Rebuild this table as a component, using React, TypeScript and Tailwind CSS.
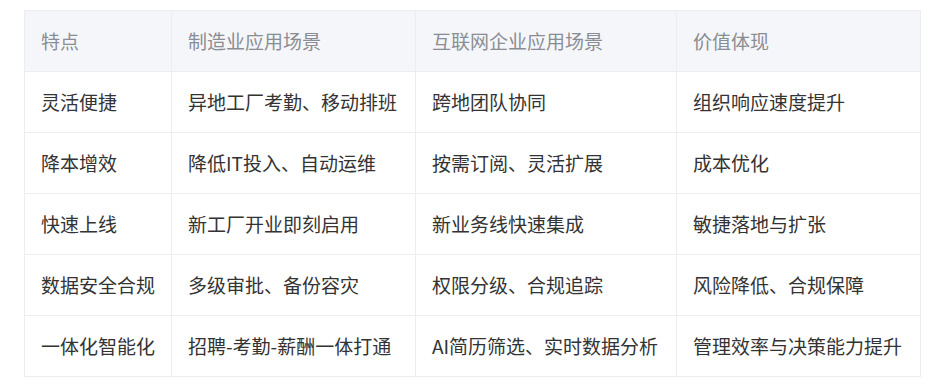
import React from "react";

const header = ["特点", "制造业应用场景", "互联网企业应用场景", "价值体现"];
const rows = [
  ["灵活便捷", "异地工厂考勤、移动排班", "跨地团队协同", "组织响应速度提升"],
  ["降本增效", "降低IT投入、自动运维", "按需订阅、灵活扩展", "成本优化"],
  ["快速上线", "新工厂开业即刻启用", "新业务线快速集成", "敏捷落地与扩张"],
  ["数据安全合规", "多级审批、备份容灾", "权限分级、合规追踪", "风险降低、合规保障"],
  ["一体化智能化", "招聘-考勤-薪酬一体打通", "AI简历筛选、实时数据分析", "管理效率与决策能力提升"],
];

export default function App() {
  return (
    <div className="min-h-[390px] w-[951px] bg-white pl-[24px] pt-[10px]" style={{ fontFamily: '"Noto Sans CJK SC", "Noto Sans", sans-serif' }}>
      <table className="table-fixed border-collapse text-[19px] leading-[26px] w-[896px]">
        <colgroup>
          <col className="w-[147px]" />
          <col className="w-[244px]" />
          <col className="w-[261px]" />
          <col className="w-[244px]" />
        </colgroup>
        <thead>
          <tr className="bg-[#f5f6fa]">
            {header.map((h) => (
              <th key={h} className="h-[61px] border border-[#ebedf0] px-[16px] text-left font-normal text-[#8a8d93] whitespace-nowrap">
                {h}
              </th>
            ))}
          </tr>
        </thead>
        <tbody>
          {rows.map((r, i) => (
            <tr key={i}>
              {r.map((c, j) => (
                <td key={j} className="h-[61px] border border-[#ebedf0] px-[16px] text-left text-[#333333] whitespace-nowrap">
                  {c}
                </td>
              ))}
            </tr>
          ))}
        </tbody>
      </table>
    </div>
  );
}
